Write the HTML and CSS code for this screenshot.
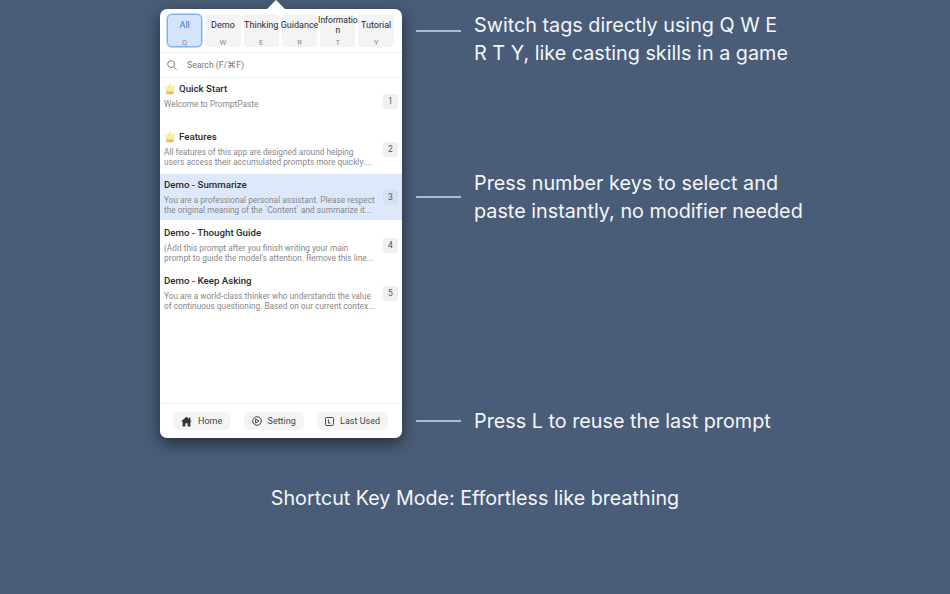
FILE: index.html
```html
<!DOCTYPE html>
<html lang="en">
<head>
    <meta charset="UTF-8">
    <title>PromptPaste</title>
    <link rel="stylesheet" href="styles.css">
</head>
<body>
    <div class="stage">
        <div class="panel">
            <div class="tabs">
                <div class="tab active"><span class="tab-name">All</span><span class="tab-key">Q</span></div>
                <div class="tab"><span class="tab-name">Demo</span><span class="tab-key">W</span></div>
                <div class="tab"><span class="tab-name">Thinking</span><span class="tab-key">E</span></div>
                <div class="tab"><span class="tab-name">Guidance</span><span class="tab-key">R</span></div>
                <div class="tab"><span class="tab-name tab-wrap">Informatio<br>n</span><span class="tab-key">T</span></div>
                <div class="tab"><span class="tab-name">Tutorial</span><span class="tab-key">Y</span></div>
            </div>

            <div class="search">
                <svg class="search-icon" width="10" height="10" viewBox="0 0 11 11"><circle cx="4.5" cy="4.5" r="3.8"/><path d="M7.3 7.3 10.6 10.6"/></svg>
                <span>Search (F/⌘F)</span>
            </div>

            <div class="list">
                <div class="row">
                    <div class="row-text">
                        <div class="row-title">
                            <svg class="crown" width="12" height="13" viewBox="0 0 12 13"><path d="M.6 2.4 3.4 5 6 .4 8.6 5 11.4 2.4 10.2 9H1.8Z" fill="#fdeaa9"/><path d="M2 9.2h8l-.5 3H2.5Z" fill="#f2bd5c"/></svg>
                            Quick Start
                        </div>
                        <div class="row-desc">Welcome to PromptPaste</div>
                    </div>
                    <span class="num">1</span>
                </div>
                <div class="row">
                    <div class="row-text">
                        <div class="row-title">
                            <svg class="crown" width="12" height="13" viewBox="0 0 12 13"><path d="M.6 2.4 3.4 5 6 .4 8.6 5 11.4 2.4 10.2 9H1.8Z" fill="#fdeaa9"/><path d="M2 9.2h8l-.5 3H2.5Z" fill="#f2bd5c"/></svg>
                            Features
                        </div>
                        <div class="row-desc">All features of this app are designed around helping<br>users access their accumulated prompts more quickly....</div>
                    </div>
                    <span class="num">2</span>
                </div>
                <div class="row selected">
                    <div class="row-text">
                        <div class="row-title">Demo - Summarize</div>
                        <div class="row-desc">You are a professional personal assistant. Please respect<br>the original meaning of the `Content` and summarize it...</div>
                    </div>
                    <span class="num">3</span>
                </div>
                <div class="row">
                    <div class="row-text">
                        <div class="row-title">Demo - Thought Guide</div>
                        <div class="row-desc">(Add this prompt after you finish writing your main<br>prompt to guide the model's attention. Remove this line...</div>
                    </div>
                    <span class="num">4</span>
                </div>
                <div class="row">
                    <div class="row-text">
                        <div class="row-title">Demo - Keep Asking</div>
                        <div class="row-desc">You are a world-class thinker who understands the value<br>of continuous questioning. Based on our current contex...</div>
                    </div>
                    <span class="num">5</span>
                </div>
            </div>

            <div class="footer">
                <div class="foot-btn">
                    <svg width="11" height="11" viewBox="0 0 11 11"><path d="M5.5.8 0 5.6h1.6V10.4h2.8V7.2h2.2v3.2h2.8V5.6H11L9.4 4.2V1.4H8v1.6Z" fill="#333"/></svg>
                    Home
                </div>
                <div class="foot-btn">
                    <svg class="stroke-icon" width="10" height="10" viewBox="0 0 11 11"><circle cx="5.5" cy="5.5" r="4.7"/><path d="M4 3.2 7.6 5.5 4 7.8Z"/></svg>
                    Setting
                </div>
                <div class="foot-btn">
                    <svg class="stroke-icon" width="9" height="9" viewBox="0 0 10 10"><rect x=".6" y=".6" width="8.8" height="8.8" rx="1"/><path d="M3.8 2.8V6.8H6"/></svg>
                    Last Used
                </div>
            </div>
        </div>

        <div class="notes">
            <div class="note note-tags">
                <span class="dash dash-top"></span>
                <p>Switch tags directly using Q W E<br>R T Y, like casting skills in a game</p>
            </div>
            <div class="note note-keys">
                <span class="dash"></span>
                <p>Press number keys to select and<br>paste instantly, no modifier needed</p>
            </div>
            <div class="note note-last">
                <span class="dash"></span>
                <p>Press L to reuse the last prompt</p>
            </div>
        </div>
    </div>

    <h1 class="caption">Shortcut Key Mode: Effortless like breathing</h1>
</body>
</html>
```

FILE: styles.css
```css
* {
    box-sizing: border-box;
}

body {
    margin: 0;
    height: 594px;
    overflow: hidden;
    background: #4a5d78;
    font-family: Inter, "Liberation Sans", sans-serif;
    color: #fff;
}

.stage {
    display: flex;
    padding: 9px 0 0 160px;
}

/* popover */
.panel {
    position: relative;
    width: 242px;
    height: 429px;
    flex-shrink: 0;
    display: flex;
    flex-direction: column;
    background: #fff;
    border-radius: 7px;
    box-shadow: 0 5px 16px rgba(0,0,0,0.55);
    color: #2a2a2a;
    font-family: Roboto, "Liberation Sans", sans-serif;
}

/* little arrow on top */
.panel::before {
    content: "";
    position: absolute;
    left: 107px;
    top: -9px;
    border-left: 9px solid transparent;
    border-right: 9px solid transparent;
    border-bottom: 9px solid #fff;
}

.tabs {
    display: flex;
    gap: 3px;
    height: 44px;
    padding: 5px 7px 0 7px;
    border-bottom: 1px solid #eee;
}

.tab {
    width: 35.3px;
    height: 33px;
    display: flex;
    flex-direction: column;
    align-items: center;
    background: #f4f4f4;
    border-radius: 4px;
    white-space: nowrap;
}

.tab.active {
    background: #d3e5fd;
    box-shadow: inset 0 0 0 1px #7fb1f0, 0 0 0 .5px #7fb1f0;
    border-radius: 5px;
    color: #2f7be0;
}

.tab-name {
    height: 22px;
    line-height: 22px;
    font-size: 9px;
}

.tab-wrap {
    line-height: 9.5px;
    padding-top: 2px;
    height: 22px;
    text-align: center;
    font-size: 8.5px;
}

.tab-key {
    font-size: 7.5px;
    line-height: 9px;
    margin-top: 1.5px;
    color: #888;
}

.search {
    display: flex;
    align-items: center;
    gap: 10px;
    height: 25px;
    padding-left: 7px;
    border-bottom: 1px solid #eee;
    font-size: 8.7px;
    color: #777;
}

.search-icon {
    fill: none;
    stroke: #777;
}

.list {
    flex: 1;
    display: flex;
    flex-direction: column;
    gap: 2px;
}

.row {
    display: flex;
    align-items: center;
    justify-content: space-between;
    height: 46px;
    padding: 0 4px;
}

.row.selected {
    background: #dde9fb;
}

.row-text {
    align-self: flex-start;
    padding-top: 3px;
}

.row-title {
    display: flex;
    align-items: center;
    gap: 3px;
    height: 14px;
    font-size: 9.7px;
    font-weight: 500;
}

.row-desc {
    margin-top: 4px;
    font-size: 8.3px;
    line-height: 10px;
    color: #888;
    white-space: nowrap;
}

.num {
    width: 15px;
    height: 15px;
    flex-shrink: 0;
    background: #f0f0f0;
    border-radius: 3px;
    text-align: center;
    font-size: 8.5px;
    line-height: 15px;
    color: #555;
}

.row.selected .num {
    background: #d5e1f3;
}

/* bottom buttons */
.footer {
    display: flex;
    justify-content: space-between;
    align-items: center;
    height: 35px;
    padding: 0 14px 0 13px;
    border-top: 1px solid #f0f0f0;
}

.foot-btn {
    display: flex;
    align-items: center;
    gap: 6px;
    height: 18px;
    padding: 0 8px;
    background: #f4f4f4;
    border-radius: 5px;
    font-size: 9px;
    color: #444;
}

.stroke-icon {
    fill: none;
    stroke: #333;
}

/* notes on the right */
.notes {
    flex: 1;
    padding: 2px 0 0 14px;
}

.note {
    display: flex;
    align-items: center;
    gap: 13px;
}

.note p {
    margin: 0;
    font-size: 19.8px;
    line-height: 28px;
    white-space: nowrap;
    color: #f4f6f8;
}

.note-keys {
    margin-top: 102px;
}

.note-last {
    margin-top: 182px;
}

.dash {
    width: 45px;
    height: 2px;
    background: #aebbcd;
}

.dash-top {
    align-self: flex-start;
    margin-top: 19px;
}

.caption {
    margin: 46px 0 0;
    text-align: center;
    font-size: 19.7px;
    font-weight: 400;
    line-height: 28px;
    color: #f4f6f8;
}
```
